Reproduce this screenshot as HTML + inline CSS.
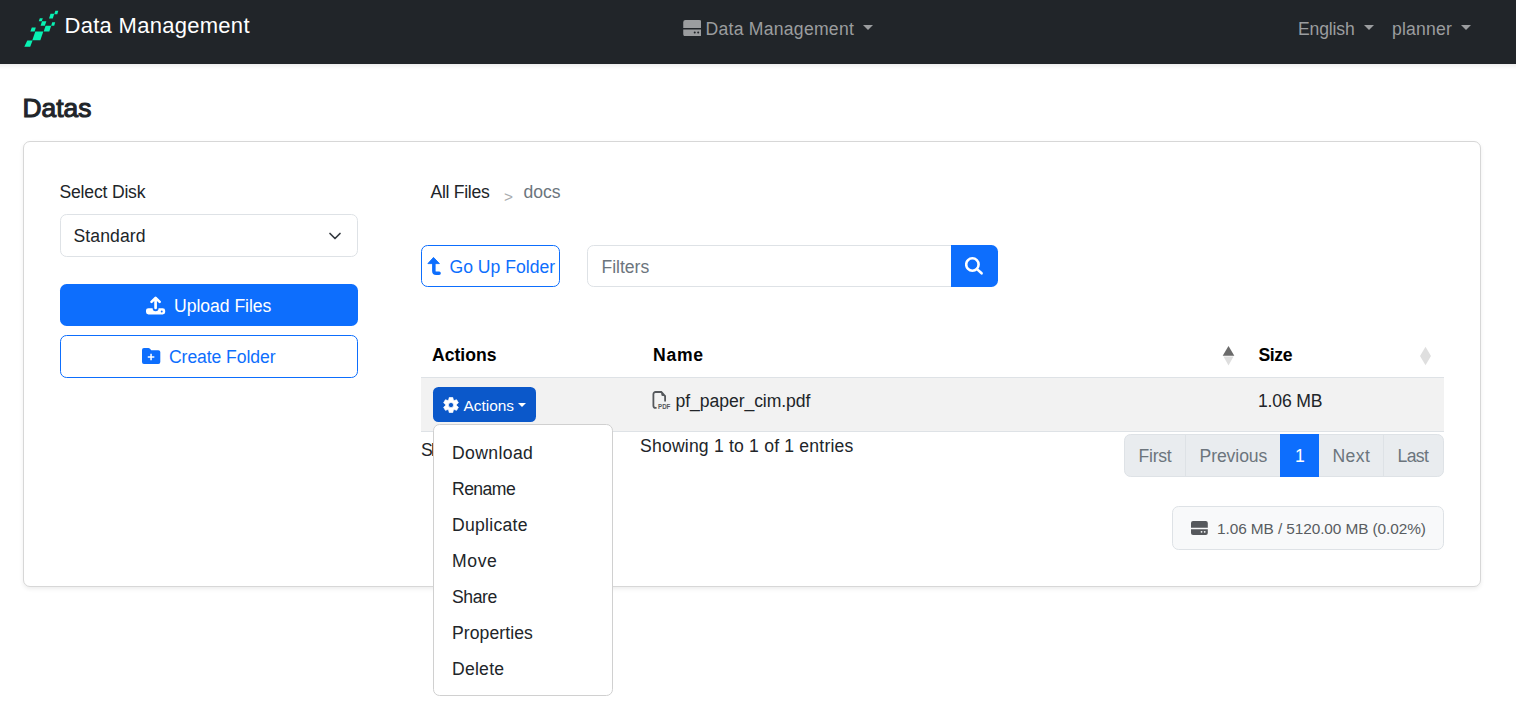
<!DOCTYPE html>
<html lang="en">
<head>
<meta charset="utf-8">
<title>Data Management</title>
<style>
*{box-sizing:border-box;margin:0;padding:0}
html,body{width:1516px;height:722px;overflow:hidden;background:#fff}
body{position:relative;font-family:"Liberation Sans",sans-serif;font-size:17.6px;color:#212529;line-height:1}
.abs{position:absolute}
.t{position:absolute;white-space:nowrap;line-height:1}
/* navbar */
#nav{left:-20px;top:0;width:1556px;height:64px;background:#212529;box-shadow:0 2px 4px rgba(0,0,0,.08)}
.navl{color:#9b9d9f}
.caret{position:absolute;width:0;height:0;border-left:5.2px solid transparent;border-right:5.2px solid transparent;border-top:5.5px solid #9b9d9f}
/* card */
#card{left:23px;top:141px;width:1458px;height:446px;border:1px solid #d7d7d7;border-radius:7px;background:#fff;box-shadow:0 2px 4px rgba(0,0,0,.075)}
.btn{position:absolute;border-radius:6.6px}
.inp{position:absolute;border:1px solid #dee2e6;background:#fff}
/*LS-BEGIN*/
#brand{left:64.50px;top:15px;letter-spacing:0.286px}
#navc{left:705.50px;top:21px;letter-spacing:0.257px}
#naven{left:1298.00px;top:21px;letter-spacing:-0.167px}
#navpl{left:1392.00px;top:21px;letter-spacing:0.200px}
#h{left:22.50px;top:95px;letter-spacing:0.000px}
#lbl{left:59.50px;top:184px;letter-spacing:-0.200px}
#selt{left:73.50px;top:228px;letter-spacing:0.086px}
#upt{left:174.00px;top:298px;letter-spacing:-0.036px}
#cft{left:169.00px;top:349px;letter-spacing:-0.083px}
#bc1{left:430.50px;top:184px;letter-spacing:-0.300px}
#bc2{left:523.50px;top:184px;letter-spacing:-0.067px}
#got{left:449.50px;top:259px;letter-spacing:0.000px}
#fit{left:601.50px;top:259px;letter-spacing:-0.033px}
#th1{left:432.00px;top:347px;letter-spacing:0.000px}
#th2{left:653.00px;top:347px;letter-spacing:0.733px}
#th3{left:1258.50px;top:347px;letter-spacing:-0.400px}
#actt{left:463.50px;top:398px;letter-spacing:0.000px}
#fname{left:675.50px;top:393px;letter-spacing:-0.067px}
#fsize{left:1258.00px;top:393px;letter-spacing:-0.167px}
#info{left:640.00px;top:438px;letter-spacing:0.192px}
#p1{left:1138.50px;top:448px;letter-spacing:-0.250px}
#p2{left:1199.50px;top:448px;letter-spacing:-0.086px}
#p3{left:1295.00px;top:448px;letter-spacing:0.000px}
#p4{left:1332.50px;top:448px;letter-spacing:0.400px}
#p5{left:1397.50px;top:448px;letter-spacing:-0.600px}
#stt{left:1217.00px;top:521px;letter-spacing:-0.089px}
#d1{left:452.00px;top:445px;letter-spacing:0.371px}
#d2{left:452.00px;top:481px;letter-spacing:-0.560px}
#d3{left:452.00px;top:517px;letter-spacing:0.275px}
#d4{left:452.00px;top:553px;letter-spacing:0.600px}
#d5{left:452.00px;top:589px;letter-spacing:-0.400px}
#d6{left:452.00px;top:625px;letter-spacing:0.067px}
#d7{left:452.00px;top:661px;letter-spacing:0.240px}
#show{left:421px;top:442px;letter-spacing:-1.8px}
#bcs{left:504px;top:189px}
/*LS-END*/
.th{font-weight:bold;color:#000}
.pg{color:#6c757d}
</style>
</head>
<body>
<!-- NAVBAR -->
<div id="nav" class="abs"></div>
<svg class="abs" style="left:22px;top:8px" width="40" height="42" viewBox="22 8 40 42" fill="#08f2b3">
<polygon points="27.3,40.4 32.6,40.4 30.2,46.7 24.3,46.7"/>
<polygon points="35.3,31.6 43.3,31.6 40.3,40.3 32.3,40.3"/>
<polygon points="31.8,27.5 35.8,27.5 34.6,31.5 30.4,31.5"/>
<polygon points="45.6,25.8 51.2,25.8 49.3,31.5 43.7,31.5"/>
<polygon points="42,21.3 46.4,21.3 44.8,25.7 40.6,25.7"/>
<polygon points="39.8,18.2 42.8,18.2 41.8,21.3 38.8,21.3"/>
<polygon points="52.2,22.2 55.2,22.2 54.2,25.7 51.2,25.7"/>
<polygon points="50.5,13.8 54.3,13.8 52.8,18.6 49,18.6"/>
<polygon points="55.3,10.7 58.3,10.7 57.3,14.2 54.3,14.2"/>
</svg>
<span class="t" id="brand" style="font-size:22px;color:#fff">Data Management</span>
<span class="t navl" id="navc">Data Management</span>
<span class="t navl" id="naven">English</span>
<span class="t navl" id="navpl">planner</span>
<i class="caret" style="left:863px;top:25px"></i>
<i class="caret" style="left:1364px;top:25px"></i>
<i class="caret" style="left:1461px;top:25px"></i>
<!-- hdd icon nav -->
<svg class="abs" style="left:682.5px;top:20px" width="18.8" height="16.3" viewBox="0 0 18 16" fill="#9b9d9f"><path d="M2.2 0h13.6A2.2 2.2 0 0 1 18 2.2V7.9H0V2.2A2.2 2.2 0 0 1 2.2 0zM0 9.3h18v4.5A2.2 2.2 0 0 1 15.8 16H2.2A2.2 2.2 0 0 1 0 13.8zM11.3 11.3a1 1 0 1 0 0 2 1 1 0 0 0 0-2zM14.7 11.3a1 1 0 1 0 0 2 1 1 0 0 0 0-2z" fill-rule="evenodd"/></svg>

<!-- HEADING -->
<span class="t" id="h" style="font-size:26.4px;font-weight:normal;color:#212529;-webkit-text-stroke:1.1px #212529">Datas</span>

<!-- CARD -->
<div id="card" class="abs"></div>

<!-- LEFT COLUMN -->
<span class="t" id="lbl">Select Disk</span>
<div class="inp" id="sel" style="left:60px;top:214px;width:298px;height:43px;border-radius:6.6px"></div>
<span class="t" id="selt">Standard</span>
<svg class="abs" style="left:328px;top:230.8px" width="14" height="10" viewBox="0 0 14 10" fill="none" stroke="#343a40" stroke-width="1.7" stroke-linecap="round" stroke-linejoin="round"><path d="M2 2.5l5 5 5-5"/></svg>

<div class="btn" id="bup" style="left:60px;top:284px;width:298px;height:42px;background:#0d6efd"></div>
<svg class="abs" style="left:146.4px;top:295.8px" width="19.2" height="19.6" viewBox="0 0 20 20" fill="#fff"><path d="M8.6 4.9v7.3a1.4 1.4 0 0 0 2.8 0V4.9l1.9 1.9a1.3 1.3 0 0 0 1.9-1.9L11 0.800000000000001a1.4 1.4 0 0 0-2 0L4.8 4.9a1.3 1.3 0 0 0 1.9 1.9zM2.6 12.6A2.6 2.6 0 0 0 0 15.2v1.300000000000001A2.6 2.6 0 0 0 2.6 19.1h14.8A2.6 2.6 0 0 0 20 16.5v-1.3a2.6 2.6 0 0 0-2.6-2.6h-4.3a3.1 3.1 0 0 1-6.2 0zM16.4 14.9a1 1 0 1 1 0 2 1 1 0 0 1 0-2z" fill-rule="evenodd"/></svg>
<span class="t" id="upt" style="color:#fff">Upload Files</span>

<div class="btn" id="bcf" style="left:60px;top:335px;width:298px;height:43px;border:1px solid #0d6efd;background:#fff"></div>
<svg class="abs" style="left:142.4px;top:348.2px" width="18.3" height="16" preserveAspectRatio="none" viewBox="0 0 19 17" fill="#0d6efd"><path d="M2 0h4.6c.7 0 1.300000000000001.3 1.7.8L9.6 2.3h7.4A2 2 0 0 1 19 4.3V15a2 2 0 0 1-2 2H2A2 2 0 0 1 0 15V2A2 2 0 0 1 2 0zM8.6 6.2v2.6H6v1.6h2.6V13h1.6v-2.6h2.6V8.8h-2.6V6.2z" fill-rule="evenodd"/></svg>
<span class="t" id="cft" style="color:#0d6efd">Create Folder</span>

<!-- BREADCRUMB -->
<span class="t" id="bc1">All Files</span>
<span class="t" id="bcs" style="font-size:15.4px;color:#a9acaf">&gt;</span>
<span class="t" id="bc2" style="color:#6c757d">docs</span>

<!-- TOOLBAR -->
<div class="btn" id="bgo" style="left:421px;top:245px;width:139px;height:42px;border:1px solid #0d6efd;background:#fff"></div>
<svg class="abs" style="left:427px;top:256px" width="16" height="21" viewBox="0 0 16 21"><polygon points="6.5,1.4 12.4,7.6 0.9,7.6" fill="#0d6efd" stroke="#0d6efd" stroke-width="0.9" stroke-linejoin="round"/><path d="M6.85 7.2V15a2.25 2.25 0 0 0 2.25 2.25H12.1" fill="none" stroke="#0d6efd" stroke-width="3.5" stroke-linecap="round"/></svg>
<span class="t" id="got" style="color:#0d6efd">Go Up Folder</span>

<div class="inp" id="fin" style="left:587px;top:245px;width:365px;height:42px;border-radius:6.6px 0 0 6.6px"></div>
<span class="t" id="fit" style="color:#6c757d">Filters</span>
<div class="btn" id="bse" style="left:951px;top:245px;width:47px;height:42px;background:#0d6efd;border-radius:0 6.6px 6.6px 0"></div>
<svg class="abs" style="left:965px;top:257px" width="20" height="20" viewBox="0 0 20 20" fill="none" stroke="#fff" stroke-width="2.6" stroke-linecap="round"><circle cx="7.4" cy="7.5" r="6.2"/><path d="M12 12.1l4.6 4.2"/></svg>

<!-- TABLE -->
<span class="t th" id="th1">Actions</span>
<span class="t th" id="th2">Name</span>
<span class="t th" id="th3">Size</span>
<svg class="abs" style="left:1222px;top:345px" width="13" height="22" viewBox="0 0 13 22"><polygon points="6.5,1 12.3,10.8 0.7,10.8" fill="#6a6a6a"/><polygon points="1.5,11.6 11.5,11.6 6.5,20.6" fill="#dedede"/></svg>
<svg class="abs" style="left:1418.5px;top:345px" width="13" height="22" viewBox="0 0 13 22"><polygon points="6.5,1.8 12,11 6.5,20.3 1,11" fill="#dfdfdf"/></svg>
<div class="abs" id="hline" style="left:421px;top:377px;width:1023px;height:1px;background:#dee2e6"></div>
<div class="abs" id="row" style="left:421px;top:378px;width:1023px;height:53px;background:#f2f2f2"></div>
<div class="abs" id="rline" style="left:421px;top:431px;width:1023px;height:1px;background:#dee2e6"></div>

<div class="btn" id="bact" style="left:433px;top:387px;width:103px;height:35px;background:#0b58ca;border-radius:5.5px"></div>
<svg class="abs" style="left:442.5px;top:397px" width="16" height="16.1" viewBox="0 0 16 16" fill="#fff"><path fill-rule="evenodd" stroke="#fff" stroke-width="0.7" stroke-linejoin="round" d="M10.32 3.02L9.80 0.51L6.20 0.51L5.68 3.02L4.85 3.49L2.41 2.70L0.62 5.81L2.52 7.52L2.52 8.48L0.62 10.19L2.41 13.30L4.85 12.51L5.68 12.98L6.20 15.49L9.80 15.49L10.32 12.98L11.15 12.51L13.59 13.30L15.38 10.19L13.48 8.48L13.48 7.52L15.38 5.81L13.59 2.70L11.15 3.49zM8 5.4a2.6 2.6 0 1 0 0 5.2 2.6 2.6 0 0 0 0-5.2z"/></svg>
<span class="t" id="actt" style="font-size:15.4px;color:#fff">Actions</span>
<i class="caret" style="left:518px;top:403px;border-left-width:4px;border-right-width:4px;border-top:4px solid #fff"></i>

<!-- pdf icon -->
<svg class="abs" style="left:650px;top:389px" width="24" height="24" viewBox="0 0 24 24"><path d="M15.1 12.6V7.1L11.3 3H5.6A2.2 2.2 0 0 0 3.4 5.2V16.7A2.2 2.2 0 0 0 5.6 18.9H6.6" fill="none" stroke="#55585c" stroke-width="1.8"/><path d="M11.3 3V5.6a1.5 1.5 0 0 0 1.5 1.5H15.1z" fill="#55585c"/><text x="8" y="19.8" font-family="Liberation Sans, sans-serif" font-weight="bold" font-size="6.6" fill="#55585c" textLength="12.4" lengthAdjust="spacingAndGlyphs">PDF</text></svg>
<span class="t" id="fname">pf_paper_cim.pdf</span>
<span class="t" id="fsize">1.06 MB</span>

<!-- table footer -->
<span class="t" id="show">Show</span>
<span class="t" id="info">Showing 1 to 1 of 1 entries</span>

<!-- pagination -->
<div class="abs" id="pag" style="left:1124px;top:434px;width:320px;height:43px;background:#e9ecef;border:1px solid #dee2e6;border-radius:6.6px"></div>
<div class="abs" style="left:1185px;top:434px;width:1px;height:43px;background:#dee2e6"></div>
<div class="abs" style="left:1383px;top:434px;width:1px;height:43px;background:#dee2e6"></div>
<div class="abs" id="pact" style="left:1280px;top:434px;width:39px;height:43px;background:#0d6efd"></div>
<span class="t pg" id="p1">First</span>
<span class="t pg" id="p2">Previous</span>
<span class="t pg" id="p3" style="color:#fff">1</span>
<span class="t pg" id="p4">Next</span>
<span class="t pg" id="p5">Last</span>

<!-- storage badge -->
<div class="abs" id="stor" style="left:1172px;top:506px;width:272px;height:44px;background:#f8f9fa;border:1px solid #dee2e6;border-radius:6.6px"></div>
<svg class="abs" style="left:1191px;top:521px" width="16.8" height="14" preserveAspectRatio="none" viewBox="0 0 18 16" fill="#55585c"><path d="M2.2 0h13.6A2.2 2.2 0 0 1 18 2.2V7.7H0V2.2A2.2 2.2 0 0 1 2.2 0zM0 9.3h18v4.5A2.2 2.2 0 0 1 15.8 16H2.2A2.2 2.2 0 0 1 0 13.8zM11.3 11.4a1 1 0 1 0 0 2 1 1 0 0 0 0-2zM14.7 11.4a1 1 0 1 0 0 2 1 1 0 0 0 0-2z" fill-rule="evenodd"/></svg>
<span class="t" id="stt" style="font-size:15.4px;color:#595d61">1.06 MB / 5120.00 MB (0.02%)</span>

<!-- DROPDOWN MENU -->
<div class="abs" id="dd" style="left:433px;top:424px;width:180px;height:272px;background:#fff;border:1px solid #d0d0d0;border-radius:6.6px"></div>
<span class="t" id="d1">Download</span>
<span class="t" id="d2">Rename</span>
<span class="t" id="d3">Duplicate</span>
<span class="t" id="d4">Move</span>
<span class="t" id="d5">Share</span>
<span class="t" id="d6">Properties</span>
<span class="t" id="d7">Delete</span>
</body>
</html>
